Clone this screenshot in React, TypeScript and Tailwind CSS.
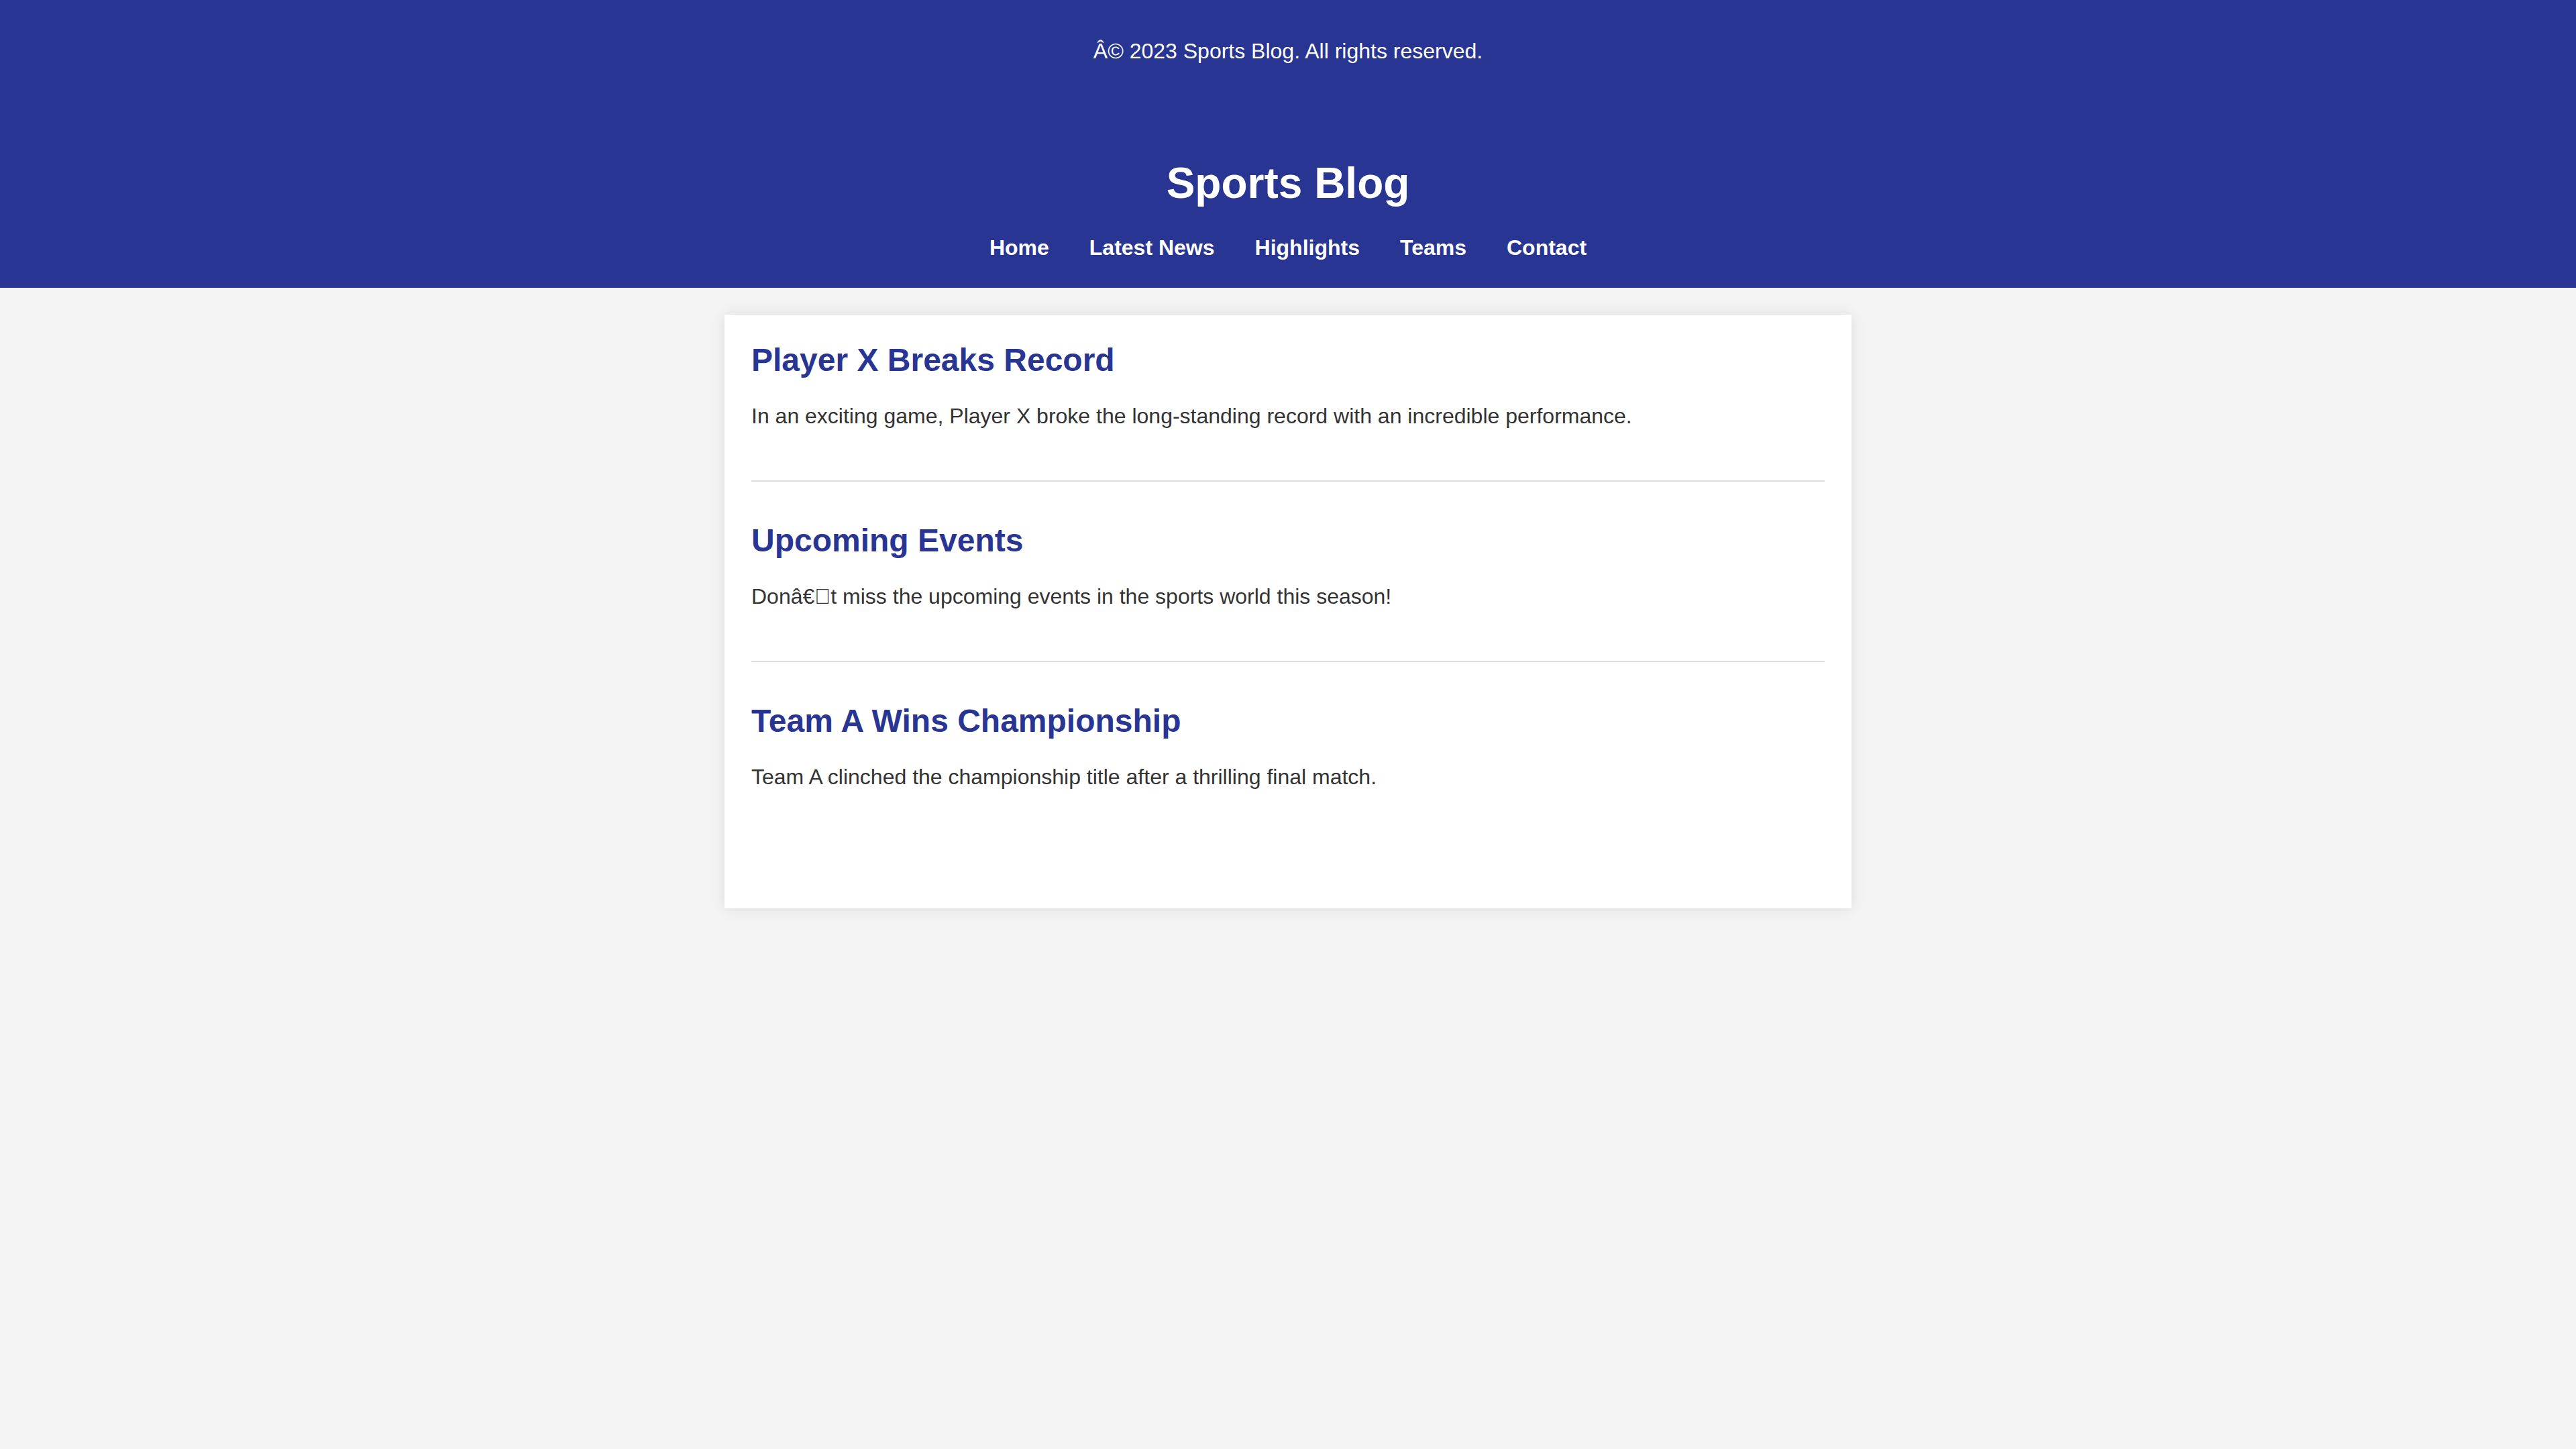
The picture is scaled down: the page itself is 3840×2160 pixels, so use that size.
import React from "react";

const articles = [
  {
    title: "Player X Breaks Record",
    body: "In an exciting game, Player X broke the long-standing record with an incredible performance.",
  },
  {
    title: "Upcoming Events",
    body: "Don\u00e2\u20ac\ue000t miss the upcoming events in the sports world this season!",
  },
  {
    title: "Team A Wins Championship",
    body: "Team A clinched the championship title after a thrilling final match.",
  },
];

const nav = ["Home", "Latest News", "Highlights", "Teams", "Contact"];

export default function App() {
  return (
    <div className="min-h-screen bg-[#f4f4f4] font-['Liberation_Sans',Arial,sans-serif] text-[#333]">
      <div className="bg-[#283593] text-white">
        <div className="pt-[58px] pb-[58px] text-center">
          <p className="text-[32px] leading-[37px]">{"\u00c2\u00a9 2023 Sports Blog. All rights reserved."}</p>
        </div>
        <header className="pt-[83px] pb-[41px] text-center">
          <h1 className="text-[64px] leading-[74px] font-bold">Sports Blog</h1>
          <nav className="mt-[41px] flex justify-center gap-[60px]">
            {nav.map((n) => (
              <a key={n} className="text-[32px] leading-[37px] font-bold text-white">
                {n}
              </a>
            ))}
          </nav>
        </header>
      </div>
      <main className="mx-auto mt-[40px] w-[1680px] bg-white p-[40px] shadow-[0_0_20px_rgba(0,0,0,0.1)]">
        {articles.map((a, i) => {
          const last = i === articles.length - 1;
          return (
            <article
              key={a.title}
              className={
                last
                  ? "pb-[137px]"
                  : "pb-[77px] mb-[60px] border-b-2 border-[#dddddd]"
              }
            >
              <h2 className="text-[48px] leading-[56px] font-bold text-[#283593] mb-[37px]">{a.title}</h2>
              <p className="text-[32px] leading-[37px]">{a.body}</p>
            </article>
          );
        })}
      </main>
    </div>
  );
}
